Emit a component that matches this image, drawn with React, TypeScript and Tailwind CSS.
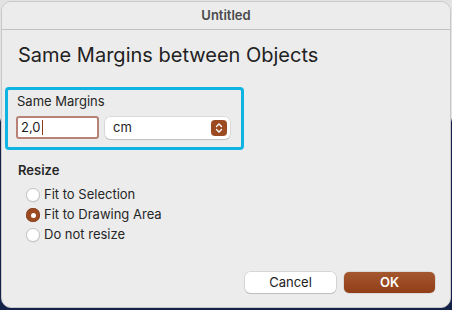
const font = { fontFamily: 'Inter, "Noto Sans", sans-serif' }

const Radio = ({ label, checked }: { label: string; checked?: boolean }) => (
  <div className="flex items-center gap-[4px] h-[20px]">
    {checked ? (
      <span className="w-[14px] h-[14px] rounded-full bg-[#9b4a22] flex items-center justify-center shadow-[inset_0_0_0_0.5px_#7a3515]">
        <span className="w-[5px] h-[5px] rounded-full bg-white" />
      </span>
    ) : (
      <span className="w-[14px] h-[14px] rounded-full bg-white border border-[#c4c4c4] shadow-[0_0.5px_1px_rgba(0,0,0,0.1)]" />
    )}
    <span className="text-[13px] text-[#262626]">{label}</span>
  </div>
)

export default function App() {
  return (
    <div
      className="w-[452px] h-[310px] p-[1px] pb-[2px] pr-[1px] bg-[linear-gradient(180deg,#e2e2e2_0px,#e2e2e2_118px,#14224a_122px,#14224a_100%)]"
      style={font}
    >
      <div className="h-full rounded-[10px] bg-[#ececec] border border-[#c9c9c9] flex flex-col overflow-hidden">
        <div className="h-[28px] shrink-0 flex items-center justify-center border-b border-[#c2c2c2] bg-[#ececec]">
          <span className="text-[13px] font-semibold text-[#4a4a4a]">Untitled</span>
        </div>
        <div className="flex-1 flex flex-col px-[16px] pt-[13px]">
          <h1 className="text-[20px] leading-[24px] text-[#222]">Same Margins between Objects</h1>

          <div className="mt-[20px] -ml-[13px] w-[239px] rounded-[4px] border-[3px] border-[#0fb4e3] pl-[8px] pt-[3px] pb-[8px]">
            <div className="text-[13px] leading-[16px] text-[#262626] pl-[1px]">Same Margins</div>
            <div className="mt-[7px] flex items-center gap-[6px]">
              <div className="w-[83px] h-[23px] rounded-[3px] border-[2.5px] border-[#b98276] bg-white flex items-center pl-[3px]">
                <span className="text-[13px] text-[#1d1d1d]">2,0</span>
                <span className="w-[1.5px] h-[15px] bg-[#8d3b1c] ml-[1px]" />
              </div>
              <div className="w-[125px] h-[22px] rounded-[5px] bg-white shadow-[0_0_0_0.5px_rgba(0,0,0,0.15),0_1px_1px_rgba(0,0,0,0.12)] flex items-center justify-between pl-[8px] pr-[3px]">
                <span className="text-[13px] text-[#1d1d1d]">cm</span>
                <span className="w-[16px] h-[16px] rounded-[4px] bg-[#9b4a22] flex items-center justify-center">
                  <svg width="8" height="12" viewBox="0 0 8 12" fill="none" stroke="white" strokeWidth="1.4" strokeLinecap="round" strokeLinejoin="round">
                    <path d="M1.5 4.5 L4 2 L6.5 4.5" />
                    <path d="M1.5 7.5 L4 10 L6.5 7.5" />
                  </svg>
                </span>
              </div>
            </div>
          </div>

          <div className="mt-[12px] text-[13px] leading-[16px] font-semibold text-[#262626]">Resize</div>
          <div className="mt-[7px] pl-[8px] flex flex-col">
            <Radio label="Fit to Selection" />
            <Radio label="Fit to Drawing Area" checked />
            <Radio label="Do not resize" />
          </div>

          <div className="mt-auto mb-[14px] -mr-[1px] flex justify-end gap-[8px]">
            <button className="w-[91px] h-[21px] rounded-[5px] bg-white text-[13px] text-[#222] shadow-[0_0_0_0.5px_rgba(0,0,0,0.18),0_1px_1px_rgba(0,0,0,0.12)]">
              Cancel
            </button>
            <button className="w-[91px] h-[21px] rounded-[5px] bg-[linear-gradient(180deg,#a4582f,#913e18)] text-[13px] font-semibold text-white shadow-[0_0_0_0.5px_rgba(0,0,0,0.15)]">
              OK
            </button>
          </div>
        </div>
      </div>
    </div>
  )
}
